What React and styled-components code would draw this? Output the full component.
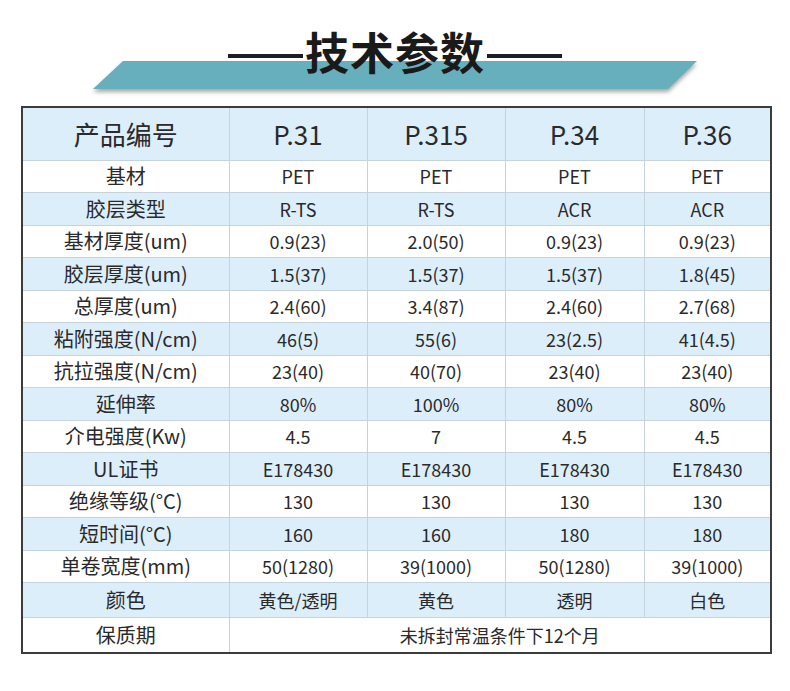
import React from 'react';
import styled, { createGlobalStyle } from 'styled-components';

const GlobalStyle = createGlobalStyle`
  html, body {
    margin: 0;
    padding: 0;
    background: #ffffff;
  }
  body {
    font-family: 'Noto Sans CJK SC', 'Noto Sans', sans-serif;
    color: #2a2a2a;
  }
`;

const Page = styled.div`
  width: 790px;
  height: 691px;
  background: #ffffff;
`;

const Header = styled.div`
  display: grid;
  height: 106px;
  justify-items: center;
`;

const BannerShadow = styled.div`
  grid-area: 1 / 1;
  margin-top: 61px;
  filter: drop-shadow(0 3px 2px rgba(0, 0, 0, 0.35));
`;

const Banner = styled.div`
  width: 604px;
  height: 28px;
  background: #67afbc;
  clip-path: polygon(30px 0, 100% 0, calc(100% - 29px) 100%, 0 100%);
`;

const TitleRow = styled.div`
  grid-area: 1 / 1;
  position: relative;
  z-index: 1;
  margin-top: 29px;
  display: flex;
  align-items: flex-start;
  height: 44px;
`;

const Dash = styled.span`
  width: 75px;
  height: 4px;
  margin-top: 25px;
  background: #1e1e1e;
`;

const Title = styled.h1`
  margin: 0 2px;
  font-size: 44px;
  line-height: 44px;
  font-weight: 700;
  color: #1a1a1a;
  letter-spacing: 1px;
`;

const Table = styled.table`
  margin-left: 21px;
  width: 751px;
  border-collapse: collapse;
  table-layout: fixed;
  border: 2px solid #3c3c3c;
`;

const Row = styled.tr`
  height: ${(p) => p.h || 32.5}px;
  background: ${(p) => (p.blue ? '#ddeefb' : '#ffffff')};
`;

const Cell = styled.td`
  padding: 0;
  text-align: center;
  vertical-align: middle;
  border: 1px solid #c6d2dc;
  font-size: ${(p) => (p.head ? 26 : p.label ? 20 : 18)}px;
  line-height: 1;
  color: #2a2a2a;
  white-space: nowrap;
`;

const products = ['P.31', 'P.315', 'P.34', 'P.36'];

const rows = [
  ['基材', 'PET', 'PET', 'PET', 'PET'],
  ['胶层类型', 'R-TS', 'R-TS', 'ACR', 'ACR'],
  ['基材厚度(um)', '0.9(23)', '2.0(50)', '0.9(23)', '0.9(23)'],
  ['胶层厚度(um)', '1.5(37)', '1.5(37)', '1.5(37)', '1.8(45)'],
  ['总厚度(um)', '2.4(60)', '3.4(87)', '2.4(60)', '2.7(68)'],
  ['粘附强度(N/cm)', '46(5)', '55(6)', '23(2.5)', '41(4.5)'],
  ['抗拉强度(N/cm)', '23(40)', '40(70)', '23(40)', '23(40)'],
  ['延伸率', '80%', '100%', '80%', '80%'],
  ['介电强度(Kw)', '4.5', '7', '4.5', '4.5'],
  ['UL证书', 'E178430', 'E178430', 'E178430', 'E178430'],
  ['绝缘等级(°C)', '130', '130', '130', '130'],
  ['短时间(°C)', '160', '160', '180', '180'],
  ['单卷宽度(mm)', '50(1280)', '39(1000)', '50(1280)', '39(1000)'],
];

export default function App() {
  return (
    <Page>
      <GlobalStyle />
      <Header>
        <BannerShadow>
          <Banner />
        </BannerShadow>
        <TitleRow>
          <Dash />
          <Title>技术参数</Title>
          <Dash />
        </TitleRow>
      </Header>
      <Table>
        <colgroup>
          <col style={{ width: 207 }} />
          <col style={{ width: 138 }} />
          <col style={{ width: 138 }} />
          <col style={{ width: 139 }} />
          <col />
        </colgroup>
        <tbody>
          <Row h={53} blue>
            <Cell head>产品编号</Cell>
            {products.map((p) => (
              <Cell head key={p}>
                {p}
              </Cell>
            ))}
          </Row>
          {rows.map((r, i) => (
            <Row key={r[0]} blue={i % 2 === 1}>
              <Cell label>{r[0]}</Cell>
              {r.slice(1).map((v, j) => (
                <Cell key={j}>{v}</Cell>
              ))}
            </Row>
          ))}
          <Row h={35} blue>
            <Cell label>颜色</Cell>
            <Cell>黄色/透明</Cell>
            <Cell>黄色</Cell>
            <Cell>透明</Cell>
            <Cell>白色</Cell>
          </Row>
          <Row h={35}>
            <Cell label>保质期</Cell>
            <Cell colSpan={4}>未拆封常温条件下12个月</Cell>
          </Row>
        </tbody>
      </Table>
    </Page>
  );
}
